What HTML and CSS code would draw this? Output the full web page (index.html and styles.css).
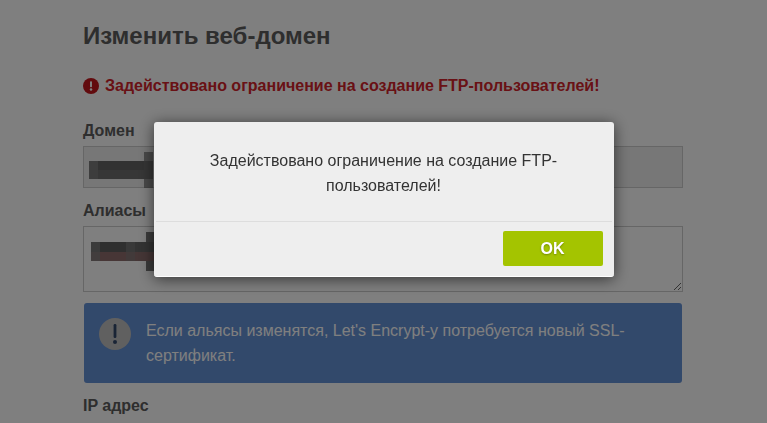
FILE: index.html
```html
<!DOCTYPE html>
<html lang="ru">
<head>
    <meta charset="UTF-8">
    <meta name="viewport" content="width=device-width, initial-scale=1.0">
    <title>Изменить веб-домен</title>
    <link rel="stylesheet" href="styles.css">
</head>
<body>
    <div class="page">
        <h1>Изменить веб-домен</h1>
        <p class="error">
            <svg class="error-icon" viewBox="0 0 16 16" width="16" height="16">
                <circle cx="8" cy="8" r="8" fill="#c4161c"/>
                <rect x="7" y="3.2" width="2" height="6" rx="0.8" fill="#fff"/>
                <circle cx="8" cy="11.6" r="1.25" fill="#fff"/>
            </svg>
            Задействовано ограничение на создание FTP-пользователей!
        </p>

        <label class="label">Домен</label>
        <div class="field-wrap">
            <input class="field field-domain" type="text" readonly>
            <svg class="redacted redacted-domain" width="70" height="36" shape-rendering="crispEdges">
                <rect x="0" y="9" width="9" height="18" fill="#7a7a7a"/>
                <rect x="9" y="9" width="55" height="9" fill="#656565"/>
                <rect x="9" y="18" width="55" height="9" fill="#6e6e6e"/>
                <rect x="55" y="0" width="9" height="36" fill="#6c6c6c" fill-opacity="0.7"/>
            </svg>
        </div>

        <label class="label label-alias">Алиасы</label>
        <div class="field-wrap">
            <textarea class="field field-alias" readonly></textarea>
            <svg class="redacted redacted-alias" width="70" height="40" shape-rendering="crispEdges">
                <rect x="55" y="0" width="9" height="39" fill="#777"/>
                <rect x="0" y="10" width="9" height="10" fill="#777"/>
                <rect x="9" y="10" width="26" height="10" fill="#5f5f5f"/>
                <rect x="35" y="10" width="9" height="10" fill="#727272"/>
                <rect x="44" y="10" width="20" height="10" fill="#666"/>
                <rect x="0" y="20" width="9" height="9" fill="#857a7a"/>
                <rect x="9" y="20" width="26" height="9" fill="#8f6d6d"/>
                <rect x="35" y="20" width="9" height="9" fill="#857575"/>
                <rect x="44" y="20" width="20" height="9" fill="#8a6c6c"/>
            </svg>
        </div>

        <div class="info">
            <svg class="info-icon" viewBox="0 0 32 32" width="32" height="32">
                <circle cx="16" cy="16" r="16" fill="#c0c0c0"/>
                <rect x="14.6" y="6" width="2.8" height="14" rx="1.2" fill="#33496b"/>
                <circle cx="16" cy="24" r="2" fill="#33496b"/>
            </svg>
            <p>Если альясы изменятся, Let's Encrypt-у потребуется новый SSL-сертификат.</p>
        </div>

        <label class="label label-ip">IP адрес</label>
    </div>

    <div class="overlay">
        <div class="dialog">
            <div class="dialog-body">Задействовано ограничение на создание FTP-пользователей!</div>
            <div class="dialog-buttons">
                <button class="ok">OK</button>
            </div>
        </div>
    </div>
</body>
</html>
```

FILE: styles.css
```css
html, body {
    height: 100%;
}
body {
    margin: 0;
    background: #fff;
    font-family: "Liberation Sans", Arial, sans-serif;
    color: #5c5c5c;
    overflow: hidden;
}
.page {
    width: 600px;
    margin-left: 83px;
}
h1 {
    margin: 0;
    padding-top: 21px;
    font-size: 24px;
    line-height: 30px;
    font-weight: bold;
}
.error {
    display: flex;
    align-items: center;
    gap: 6px;
    margin: 25px 0 0;
    font-size: 16px;
    line-height: 20px;
    font-weight: bold;
    color: #d3232a;
}
.label {
    display: block;
    font-size: 16px;
    line-height: 20px;
    font-weight: bold;
}
.error + .label {
    margin-top: 25px;
}
.label-alias {
    margin-top: 13px;
}
.label-ip {
    margin-top: 13px;
}
.field-wrap {
    position: relative;
    margin-top: 5px;
}
.field {
    display: block;
    box-sizing: border-box;
    width: 600px;
    margin: 0;
    padding: 0;
    border: 1px solid #ccc;
    outline: none;
}
.field-domain {
    height: 42px;
    background: #eee;
}
.field-alias {
    height: 66px;
    background: #fff;
}
.redacted {
    position: absolute;
    left: 6px;
    top: 6px;
}
.redacted-alias {
    left: 8px;
    top: 6px;
}
.info {
    display: flex;
    gap: 15px;
    width: 568px;
    margin: 11px 0 0 1px;
    padding: 15px 15px 15px 15px;
    background: #6592d6;
    border-radius: 3px;
    color: #fff;
    font-size: 16px;
    line-height: 25px;
}
.info-icon {
    flex: none;
}
.info p {
    margin: 0;
}
.overlay {
    position: fixed;
    top: 0;
    left: 0;
    right: 0;
    bottom: 0;
    background: rgba(0, 0, 0, 0.5);
    display: flex;
    justify-content: center;
    align-items: flex-start;
    padding-top: 122px;
    box-sizing: border-box;
}
.dialog {
    box-sizing: border-box;
    width: 460px;
    height: 155px;
    padding: 0 2px 2px;
    background: #eee;
    border-radius: 3px;
    border-bottom: 1px solid #fff;
    box-shadow: 0 0 0 0 #fff, 0 2px 15px rgba(0, 0, 0, 0.6);
}
.dialog-body {
    box-sizing: border-box;
    height: 99px;
    padding: 26px 40px 0;
    text-align: center;
    font-size: 16px;
    line-height: 25px;
    color: #333;
}
.dialog-buttons {
    display: flex;
    justify-content: flex-end;
    padding: 9px 9px 0;
    border-top: 1px solid #ddd;
    height: 53px;
    box-sizing: border-box;
}
.ok {
    width: 100px;
    height: 35px;
    border: none;
    border-radius: 2px;
    background: #a4c400;
    color: #fff;
    font-family: inherit;
    font-size: 16px;
    font-weight: bold;
    text-shadow: 0 1px 2px rgba(0, 0, 0, 0.3);
}
```
